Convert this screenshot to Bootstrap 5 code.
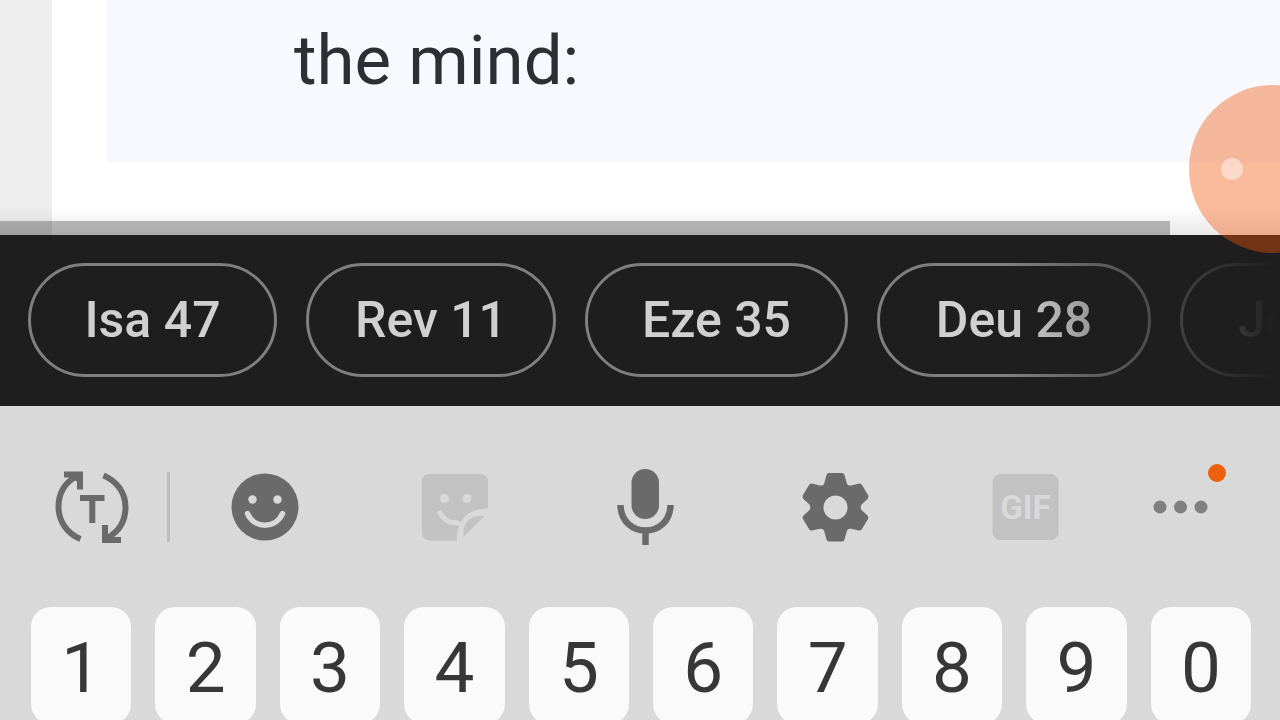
<!DOCTYPE html>
<html lang="en">
<head>
<meta charset="utf-8">
<meta name="viewport" content="width=device-width, initial-scale=1">
<title>Bible study</title>
<link href="https://cdn.jsdelivr.net/npm/bootstrap@5.3.0/dist/css/bootstrap.min.css" rel="stylesheet">
<style>
body { font-family: Roboto, "Liberation Sans", sans-serif; background: #d9d9d9; height: 100vh; overflow: hidden; }
button { border: 0; background: none; padding: 0; color: inherit; }
.reader { background: #eee; padding-left: 52px; }
.sheet { background: #fff; padding: 0 0 72px 55px; }
.verse { background: #f7f9fe; color: #2e2f33; font-size: 69px; line-height: 80px; padding: 21px 0 62px 187px; }
.shade { left: 0; right: 0; bottom: 0; height: 28px; background: linear-gradient(rgba(0,0,0,0), rgba(0,0,0,.09)); }
.load-track { left: 0; right: 0; bottom: 0; height: 14px; background: none; border-radius: 0; }
.load-track .progress-bar { background: rgba(0,0,0,.26); }
.bubble { top: 85px; right: -77px; width: 168px; height: 168px; background: rgba(242,84,8,.4); z-index: 3; }
.bubble span { width: 22px; height: 22px; margin-left: 32px; background: rgba(255,255,255,.45); }
.strip { background: #1e1e1e; padding: 28px 0 29px 28px; }
.chips { display: grid; grid-template-columns: 249px 250px 263px 274px 1fr; gap: 29px; overflow: hidden; -webkit-mask-image: linear-gradient(to left, transparent 4px, #000 270px); mask-image: linear-gradient(to left, transparent 4px, #000 270px); }
.chip { height: 114px; border: 3px solid #7f7f7f; border-radius: 57px; color: #d0d0d0; font-size: 50px; font-weight: 500; line-height: 60px; white-space: nowrap; }
.chip-cut { border-right: 0; border-radius: 57px 0 0 57px; padding-left: 55px; text-align: left; min-width: 0; }
.tools { display: grid; grid-template-columns: 170fr 190fr 190fr 190fr 190fr 190fr 160fr; height: 201px; color: #6a6a6a; }
.tools svg { width: 80px; height: 80px; display: block; }
.tools .faded { color: #c2c2c2; }
.first-tool { padding-left: 17px; }
.rule { width: 3px; height: 70px; background: #bcbcbc; }
.last-tool { padding-right: 40px; color: #808080; }
.notice { width: 18px; height: 18px; background: #ea600c; top: -3px; right: -6px; }
.keys { gap: 24px; padding: 0 29px 0 31px; }
.keycap { height: 117px; border-radius: 20px; background: #fafafa; color: #373737; font-size: 71px; line-height: 80px; padding-top: 4px; }
</style>
</head>
<body>
<main class="reader position-relative">
  <div class="sheet"><p class="verse mb-0">the mind:</p></div>
  <div class="shade position-absolute"></div>
  <div class="load-track progress position-absolute" role="progressbar" aria-label="Page loading" aria-valuenow="91" aria-valuemin="0" aria-valuemax="100"><div class="progress-bar" style="width:91.4%"></div></div>
</main>
<button class="bubble position-absolute rounded-circle d-flex align-items-center" aria-label="Open floating menu"><span class="rounded-circle"></span></button>

<nav class="strip" aria-label="Chapters">
  <div class="chips">
    <button class="chip">Isa 47</button>
    <button class="chip">Rev 11</button>
    <button class="chip">Eze 35</button>
    <button class="chip">Deu 28</button>
    <button class="chip chip-cut">Jo</button>
  </div>
</nav>

<section aria-label="Keyboard">
  <div class="tools align-items-center">
    <div class="first-tool d-flex align-items-center">
      <div class="flex-fill d-flex justify-content-center">
      <button aria-label="Text conversion"><svg viewBox="0 0 80 80" fill="none" stroke="currentColor" stroke-width="6">
        <path d="M28.500 72C15 66.500 6.500 54 6.500 40C6.500 27 12.500 16 24 9.500M51.500 8.500C65 14 73.500 26 73.500 40C73.500 53 67.500 64 56 70.500"/>
        <path d="M12 7.500H28V22.500M69 73H53V58"/><path d="M19 9H27V17ZM61 72H53V64Z" fill="currentColor" stroke="none"/>
        <path d="M28 31H52.500M40.300 31V56"/></svg></button></div>
      <span class="rule"></span>
    </div>
    <button class="d-flex justify-content-center" aria-label="Emoji"><svg viewBox="0 0 80 80"><circle cx="40" cy="40" r="33.500" fill="currentColor"/><circle cx="27.500" cy="32.500" r="4.200" fill="#d9d9d9"/><circle cx="52.500" cy="32.500" r="4.200" fill="#d9d9d9"/><path d="M22.500 46.500C29 62 51 62 57.500 46.500" fill="none" stroke="#d9d9d9" stroke-width="5.500" stroke-linecap="round"/></svg></button>
    <button class="faded d-flex justify-content-center" aria-label="Stickers"><svg viewBox="0 0 80 80"><path d="M15 7H65Q73 7 73 15V41.500C53 42 42.500 52 42 73.500H15Q7 73.500 7 65V15Q7 7 15 7Z" fill="currentColor"/><circle cx="29.500" cy="31.500" r="4.500" fill="#d9d9d9"/><circle cx="52" cy="31.500" r="4.500" fill="#d9d9d9"/><path d="M25 46C30 54 35 56 43 56" fill="none" stroke="#d9d9d9" stroke-width="5" stroke-linecap="round"/><path d="M42 73.500C42.500 52 53 42 73 41.500V47L47 73.500Z" fill="#d9d9d9"/><path d="M48.500 70V64Q50 50 65 49H69.500Z" fill="currentColor"/></svg></button>
    <button class="d-flex justify-content-center" aria-label="Voice input"><svg viewBox="0 0 80 80"><rect x="26.500" y="2" width="27.500" height="50" rx="13.700" fill="currentColor"/><path d="M15.500 38C16 72 65 72 65.500 38M40.500 63V78" fill="none" stroke="currentColor" stroke-width="6.500"/></svg></button>
    <button class="d-flex justify-content-center" aria-label="Settings"><svg viewBox="0 0 80 80"><path d="M34 6H47Q49 6 49.500 8L52 17Q53 19 56 18.500L64 16.500Q66 16 67 18L73 28Q74 30 72.500 32L66.500 37.500Q65 40.500 66.500 43L72.500 48.500Q74 50 73 52L67 62Q66 64 64 63.500L56 61.800Q53 61.500 52 63.500L49.500 72.500Q49 74.500 47 74.500H34Q32 74.500 31.500 72.500L29 63.500Q28 61.500 25 61.800L17 63.500Q15 64 14 62L8 52Q7 50 8.500 48.500L14.500 43Q16 40.500 14.500 37.500L8.500 32Q7 30 8 28L14 18Q15 16 17 16.500L25 18.500Q28 19 29 17L31.500 8Q32 6 34 6Z" fill="currentColor"/><circle cx="40.500" cy="40.500" r="12" fill="#d9d9d9"/></svg></button>
    <button class="faded d-flex justify-content-center" aria-label="GIF"><svg viewBox="0 0 80 80"><rect x="7.500" y="7" width="66" height="66" rx="8" fill="currentColor"/><text x="40.500" y="52" text-anchor="middle" font-size="33" font-weight="700" fill="#d9d9d9">GIF</text></svg></button>
    <div class="last-tool d-flex justify-content-center"><button class="position-relative" aria-label="More options"><svg viewBox="0 0 80 80" fill="currentColor"><circle cx="20" cy="40" r="6.500"/><circle cx="40.500" cy="40" r="6.500"/><circle cx="61" cy="40" r="6.500"/></svg><span class="notice position-absolute rounded-circle"></span></button></div>
  </div>
  <div class="keys d-flex">
    <button class="keycap col d-flex justify-content-center align-items-center">1</button><button class="keycap col d-flex justify-content-center align-items-center">2</button><button class="keycap col d-flex justify-content-center align-items-center">3</button><button class="keycap col d-flex justify-content-center align-items-center">4</button><button class="keycap col d-flex justify-content-center align-items-center">5</button><button class="keycap col d-flex justify-content-center align-items-center">6</button><button class="keycap col d-flex justify-content-center align-items-center">7</button><button class="keycap col d-flex justify-content-center align-items-center">8</button><button class="keycap col d-flex justify-content-center align-items-center">9</button><button class="keycap col d-flex justify-content-center align-items-center">0</button>
  </div>
</section>
<script src="https://cdn.jsdelivr.net/npm/bootstrap@5.3.0/dist/js/bootstrap.bundle.min.js"></script>
</body>
</html>
